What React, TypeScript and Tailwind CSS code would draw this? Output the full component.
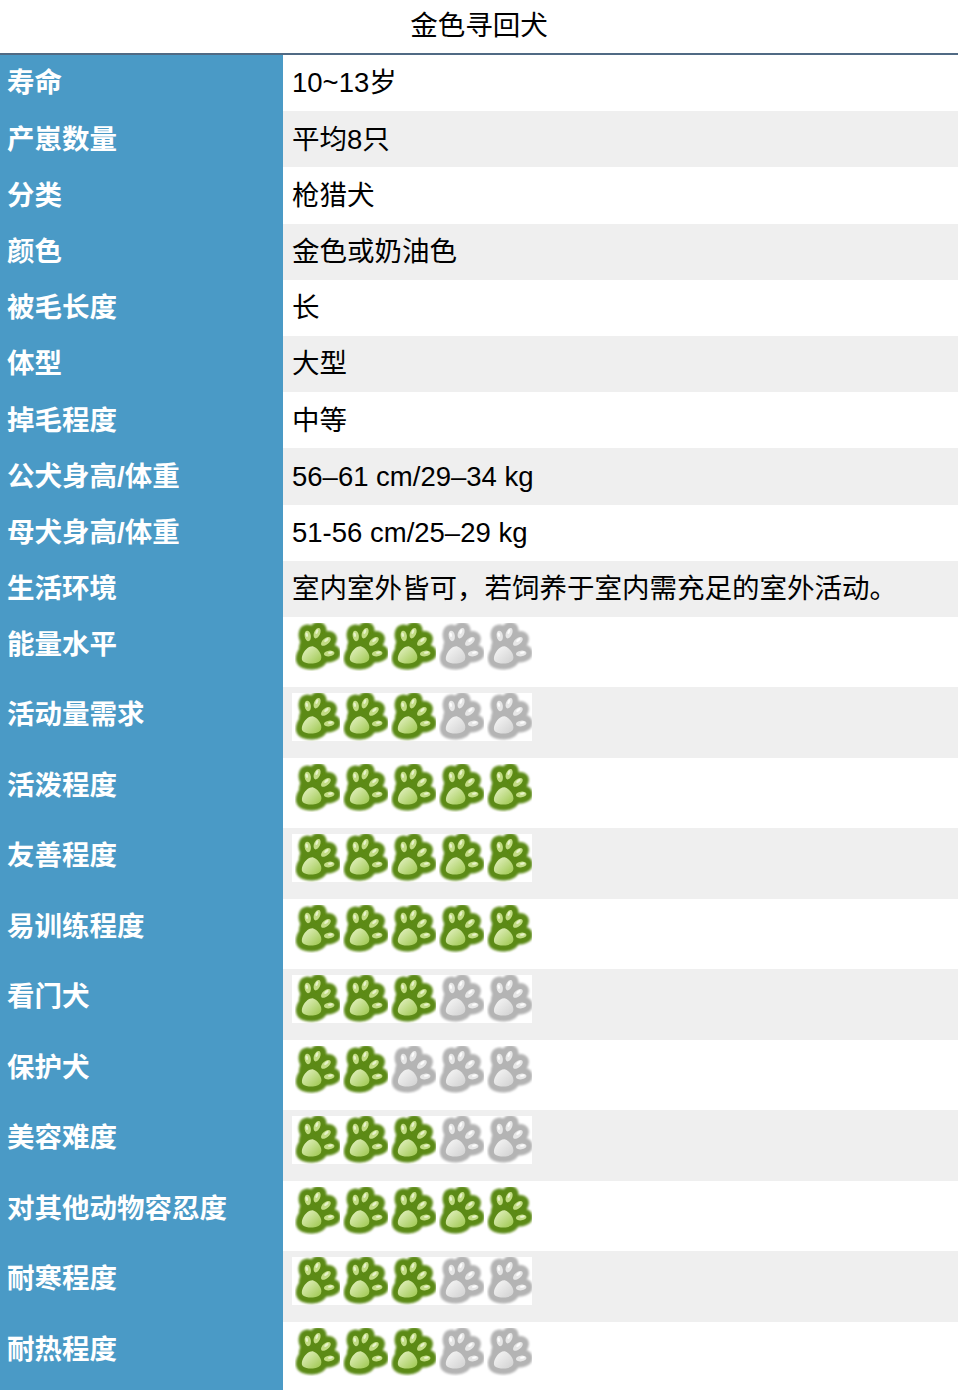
import React from "react";

const FONT = { fontFamily: '"Liberation Sans", "Noto Sans CJK SC", sans-serif' };

const textRows: [string, string][] = [
  ["寿命", "10~13岁"],
  ["产崽数量", "平均8只"],
  ["分类", "枪猎犬"],
  ["颜色", "金色或奶油色"],
  ["被毛长度", "长"],
  ["体型", "大型"],
  ["掉毛程度", "中等"],
  ["公犬身高/体重", "56–61 cm/29–34 kg"],
  ["母犬身高/体重", "51-56 cm/25–29 kg"],
  ["生活环境", "室内室外皆可，若饲养于室内需充足的室外活动。"],
];

const pawRows: [string, number][] = [
  ["能量水平", 3],
  ["活动量需求", 3],
  ["活泼程度", 5],
  ["友善程度", 5],
  ["易训练程度", 5],
  ["看门犬", 3],
  ["保护犬", 2],
  ["美容难度", 3],
  ["对其他动物容忍度", 5],
  ["耐寒程度", 3],
  ["耐热程度", 3],
];

const toes = [
  { cx: 15.5, cy: 15, rx: 2.8, ry: 4.8, r: -10 },
  { cx: 24, cy: 12.5, rx: 2.8, ry: 5, r: 22 },
  { cx: 32, cy: 20, rx: 2.8, ry: 5.3, r: 50 },
  { cx: 35, cy: 31, rx: 2.6, ry: 4.8, r: 82 },
];
const pad = "M20 24.5 C24 25.5 29.5 32 27.5 36.5 C25.5 41 14.5 41 11 38 C8 34.5 14 24 20 24.5 Z";

function Paw({ on }: { on: boolean }) {
  const dark = on ? "#5b8a12" : "#b4b4b4";
  const light = on ? "#c2dc84" : "#e6e6e6";
  const id = on ? "pawOn" : "pawOff";
  return (
    <svg width="48" height="48" viewBox="0 0 48 48" className="block">
      <defs>
        <filter id={`${id}Blur`} x="-20%" y="-20%" width="140%" height="140%">
          <feGaussianBlur stdDeviation="0.8" />
        </filter>
        <filter id={`${id}Soft`} x="-20%" y="-20%" width="140%" height="140%">
          <feGaussianBlur stdDeviation="0.35" />
        </filter>
        <linearGradient id={`${id}Pad`} x1="0" y1="0" x2="1" y2="1">
          <stop offset="0" stopColor={on ? "#e8f4c8" : "#f8f8f8"} />
          <stop offset="1" stopColor={on ? "#9cc64c" : "#d0d0d0"} />
        </linearGradient>
      </defs>
      <g transform="translate(24 25) scale(1.1) translate(-23 -26)">
        <g filter={`url(#${id}Blur)`} fill={dark} stroke={dark} strokeWidth="11" strokeLinejoin="round">
          <circle cx="23" cy="27" r="10" />
          {toes.map((t, i) => (
            <ellipse key={i} cx={t.cx} cy={t.cy} rx={t.rx} ry={t.ry} transform={`rotate(${t.r} ${t.cx} ${t.cy})`} />
          ))}
          <path d={pad} />
        </g>
        <g filter={`url(#${id}Soft)`}>
          {toes.map((t, i) => (
            <ellipse key={i} cx={t.cx} cy={t.cy} rx={t.rx} ry={t.ry} fill={light} transform={`rotate(${t.r} ${t.cx} ${t.cy})`} />
          ))}
          <path d={pad} fill={`url(#${id}Pad)`} />
          {toes.map((t, i) => (
            <ellipse key={`h${i}`} cx={t.cx - 0.7} cy={t.cy - 1.2} rx={t.rx * 0.4} ry={t.ry * 0.45} fill={on ? "#eef7d8" : "#ffffff"} opacity="0.85" transform={`rotate(${t.r} ${t.cx} ${t.cy})`} />
          ))}
        </g>
      </g>
    </svg>
  );
}

export default function App() {
  return (
    <div className="w-[958px] bg-white text-black" style={FONT}>
      <div className="h-[55px] border-b-2 border-[#506a84] flex items-center justify-center text-[27.5px] leading-none pb-[2px]">
        金色寻回犬
      </div>
      {textRows.map(([k, v], i) => (
        <div key={k} className={`flex h-[56.2px] ${i % 2 === 1 ? "bg-[#efefef]" : "bg-white"}`}>
          <div className="w-[283px] shrink-0 bg-[#4a9ac6] text-white font-bold text-[27.5px] flex items-center pl-[7px]">
            {k}
          </div>
          <div className="flex-1 flex items-center pl-[9px] text-[27.5px]">{v}</div>
        </div>
      ))}
      {pawRows.map(([k, n], i) => (
        <div key={k} className={`flex h-[70.5px] ${i % 2 === 1 ? "bg-[#efefef]" : "bg-white"}`}>
          <div className="w-[283px] shrink-0 bg-[#4a9ac6] text-white font-bold text-[27.5px] leading-[34px] pt-[11px] pl-[7px]">
            {k}
          </div>
          <div className="flex-1 pl-[9px] pt-[6px]">
            <div className="flex w-[240px] bg-white">
              {[0, 1, 2, 3, 4].map((j) => (
                <Paw key={j} on={j < n} />
              ))}
            </div>
          </div>
        </div>
      ))}
    </div>
  );
}
